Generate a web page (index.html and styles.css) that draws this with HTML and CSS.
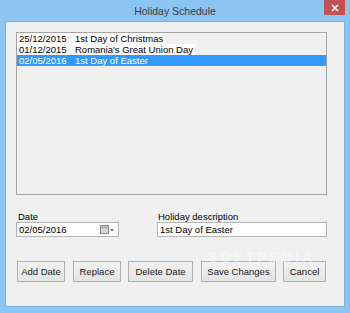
FILE: index.html
```html
<!DOCTYPE html>
<html lang="en">
<head>
    <meta charset="UTF-8">
    <title>Holiday Schedule</title>
    <link rel="stylesheet" href="styles.css">
</head>
<body>
    <div class="window">
        <div class="titlebar">
            <span></span>
            <span class="title">Holiday Schedule</span>
            <button type="button" class="close">
                <svg width="8" height="8" viewBox="0 0 8 8"><path d="M1 1L7 7M7 1L1 7" stroke="#fff" stroke-width="1.6"/></svg>
            </button>
        </div>
        <div class="client">
            <div class="listbox">
                <div class="row"><span class="date">25/12/2015</span><span>1st Day of Christmas</span></div>
                <div class="row"><span class="date">01/12/2015</span><span>Romania's Great Union Day</span></div>
                <div class="row selected"><span class="date">02/05/2016</span><span>1st Day of Easter</span></div>
            </div>

            <div class="fields">
                <div class="field">
                    <label>Date</label>
                    <div class="input date-input">
                        <span>02/05/2016</span>
                        <svg width="15" height="9" viewBox="0 0 15 9">
                            <rect x="0.5" y="0.5" width="8" height="8" fill="#d8d8d8" stroke="#8a8a8a"/>
                            <rect x="1.5" y="1.5" width="6" height="2" fill="#a9a9a9"/>
                            <path d="M10 4h4l-2 2.5z" fill="#3a6fa8"/>
                        </svg>
                    </div>
                </div>
                <div class="field wide">
                    <label>Holiday description</label>
                    <div class="input">1st Day of Easter</div>
                </div>
            </div>

            <div class="buttons">
                <button type="button" class="btn w48">Add Date</button>
                <button type="button" class="btn w48 tight">Replace</button>
                <button type="button" class="btn w65">Delete Date</button>
                <button type="button" class="btn w75 tight">Save Changes</button>
                <button type="button" class="btn w43">Cancel</button>
            </div>

            <div class="watermark">SOFTPEDIA</div>
        </div>
    </div>
</body>
</html>
```

FILE: styles.css
```css
body {
    margin: 0;
    background-color: #8cc5f2;
    font-family: 'Liberation Sans', Arial, sans-serif;
    font-size: 9.5px;
    color: #000000;
}

.window {
    width: 350px;
    height: 313px;
    box-sizing: border-box;
    padding: 0 5px 6px 5px;
    background-color: #8cc5f2;
    display: flex;
    flex-direction: column;
}

.titlebar {
    height: 21px;
    display: grid;
    grid-template-columns: 1fr auto 1fr;
    align-items: start;
}

.title {
    font-family: 'Liberation Sans', Arial, sans-serif;
    font-size: 10.5px;
    line-height: 22px;
    color: #3a3a3a;
}

.close {
    justify-self: end;
    width: 21px;
    height: 15px;
    padding: 0;
    border: none;
    background-color: #c75050;
    display: flex;
    align-items: center;
    justify-content: center;
}

.client {
    position: relative;
    flex: 1;
    background-color: #f0f0f0;
    border: 1px solid #79aee0;
    padding: 10px 0 0 10px;
}

.listbox {
    width: 311px;
    height: 163px;
    box-sizing: border-box;
    border: 1px solid #a5a5a5;
    background-color: #f0f0f0;
}

.row {
    height: 11px;
    line-height: 11px;
    width: fit-content;
    padding: 0 2px 0 2px;
    background-color: #ffffff;
    white-space: nowrap;
}

.row .date {
    display: inline-block;
    width: 56px;
}

.row.selected {
    width: auto;
    background-color: #3399ff;
    color: #ffffff;
}

.fields {
    display: flex;
    gap: 38px;
    margin-top: 16px;
}

.field label {
    display: block;
    height: 11px;
    line-height: 11px;
    padding-left: 2px;
}

.field.wide label {
    padding-left: 1px;
}

.input {
    width: 103px;
    height: 15px;
    box-sizing: border-box;
    border: 1px solid #b5b5b5;
    background-color: #ffffff;
    line-height: 13px;
    padding-left: 2px;
    display: flex;
    align-items: center;
    justify-content: space-between;
}

.date-input svg {
    margin-right: 3px;
}

.field.wide .input {
    width: 170px;
}

.buttons {
    display: flex;
    gap: 8px;
    margin-top: 24px;
    padding-left: 1px;
}

.btn {
    height: 21px;
    padding: 0;
    border: 1px solid #b0b0b0;
    background: linear-gradient(#f2f2f2, #e4e4e4);
    font-family: 'Liberation Sans', Arial, sans-serif;
    font-size: 9.5px;
    color: #1a1a1a;
}

.btn.tight {
    margin-right: -1px;
}

.w48 { width: 48px; }
.w65 { width: 65px; }
.w75 { width: 75px; }
.w43 { width: 43px; }

.watermark {
    position: absolute;
    left: 202px;
    top: 227px;
    font-family: 'Liberation Sans', Arial, sans-serif;
    font-size: 14px;
    font-weight: bold;
    letter-spacing: 3px;
    color: rgba(255, 255, 255, 0.4);
    pointer-events: none;
}
```
